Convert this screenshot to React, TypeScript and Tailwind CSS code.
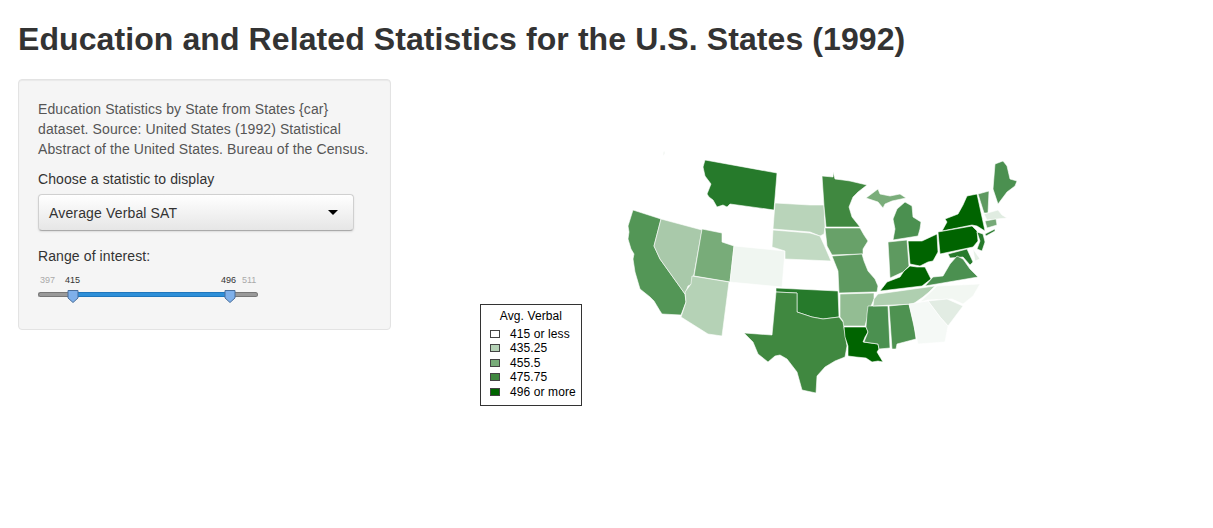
import React from 'react';

const states: { name: string; fill: string; points: string }[] = [
  { name: 'AK', fill: '#f3f7f3', points: '663,153 665,152 665,155 663,157' },
  { name: 'MT', fill: '#267a2b', points: '705,161 777,174 774,211 730,205 727,208 723,206 717,208 713,201 709,198 707,195 711,185 708,181 705,177 703,168' },
  { name: 'CA', fill: '#539656', points: '633,211 661,220 654,247 660,260 685,295 686,303 681,316 662,315 660,312 654,302 650,298 640,290 635,273 633,260 634,255 631,250 628,240 629,233 628,227' },
  { name: 'NV', fill: '#a9c9aa', points: '661,220 702,231 694,275 692,285 688,287 685,295 660,260 654,247' },
  { name: 'UT', fill: '#78ac79', points: '702,230 722,234 722,243 734,247 730,283 694,277' },
  { name: 'AZ', fill: '#b5d2b6', points: '692,277 729,283 722,337 708,335 681,318 686,303 685,293 691,285' },
  { name: 'CO', fill: '#f0f6f1', points: '734,247 785,252 782,288 730,283' },
  { name: 'SD', fill: '#b9d4ba', points: '775,204 810,206 824,206 825,228 824,235 820,237 810,233 773,230' },
  { name: 'NE', fill: '#c2dac3', points: '773,231 810,234 820,237 825,248 831,262 785,260 785,252 772,248' },
  { name: 'MN', fill: '#408840', points: '822,177 833,178 833,173 835,180 843,181 850,182 867,186 858,193 853,198 849,208 852,218 860,228 826,228 824,207' },
  { name: 'IA', fill: '#68a169', points: '825,229 860,229 864,236 868,242 863,250 863,255 832,256 827,247' },
  { name: 'MO', fill: '#5e9a60', points: '832,257 862,255 864,262 868,272 875,280 878,287 877,293 873,293 839,294 838,272' },
  { name: 'AR', fill: '#93bd93', points: '840,295 874,294 874,300 869,312 865,327 843,327 843,322 840,318' },
  { name: 'OK', fill: '#267a2b', points: '776,289 838,292 839,318 823,320 812,318 797,313 797,294 776,293' },
  { name: 'TX', fill: '#408840', points: '776,293 797,294 797,313 806,316 812,318 823,320 839,318 843,323 845,335 847,347 845,358 835,362 825,368 817,377 816,394 802,391 797,373 787,360 780,356 775,357 768,363 758,355 753,343 744,334 772,336' },
  { name: 'LA', fill: '#006400', points: '844,328 866,328 868,333 865,338 863,343 878,345 879,350 877,353 883,363 878,362 872,363 866,359 856,358 848,357 848,347 845,338' },
  { name: 'MS', fill: '#4b9050', points: '868,307 888,307 890,349 879,350 878,345 864,343 868,333 866,328 867,315' },
  { name: 'AL', fill: '#4e9251', points: '889,307 909,305 914,325 916,340 897,345 896,350 892,350' },
  { name: 'TN', fill: '#afcfb0', points: '878,295 935,287 929,293 923,298 913,305 873,307 874,300' },
  { name: 'KY', fill: '#006400', points: '880,292 887,283 900,278 904,272 910,267 917,268 925,268 931,280 922,287' },
  { name: 'IN', fill: '#5e9a60', points: '888,243 907,241 909,267 903,273 890,279 889,260' },
  { name: 'OH', fill: '#006400', points: '908,242 922,242 937,235 938,253 933,262 928,263 920,267 910,265' },
  { name: 'MI', fill: '#4b9050', points: '897,210 905,203 912,207 913,218 921,223 920,230 918,237 893,241 895,230 893,220' },
  { name: 'UP', fill: '#7aad7a', points: '866,199 878,190 880,195 890,197 900,195 906,199 892,202 885,205 883,209 878,203' },
  { name: 'NY', fill: '#006400', points: '967,197 977,195 985,232 977,227 972,226 942,232 947,223 945,220 958,215 963,206' },
  { name: 'PA', fill: '#006400', points: '938,233 972,227 977,232 978,242 973,248 940,255' },
  { name: 'NJ', fill: '#267a2b', points: '977,233 983,235 985,243 982,252 977,250 980,242' },
  { name: 'VT', fill: '#5e9a60', points: '978,195 989,192 988,214 984,214' },
  { name: 'ME', fill: '#4b9050', points: '995,165 1003,162 1007,167 1010,180 1017,182 1015,187 1007,193 998,205 993,190' },
  { name: 'MA', fill: '#e0ece1', points: '984,215 998,211 1002,216 1007,219 987,221' },
  { name: 'CT', fill: '#76a977', points: '985,222 996,220 997,226 987,229' },
  { name: 'LI', fill: '#267a2b', points: '985,235 995,230 995,232 986,237' },
  { name: 'MD', fill: '#267a2b', points: '948,255 967,250 973,263 970,266 963,258 950,259' },
  { name: 'DE', fill: '#e6f0e6', points: '973,250 980,260 975,262' },
  { name: 'VA', fill: '#4b9050', points: '925,287 933,278 943,277 950,265 957,257 963,260 970,270 978,278' },
  { name: 'NC', fill: '#f2f7f2', points: '937,287 980,285 973,297 963,305 952,300 928,301 920,303' },
  { name: 'SC', fill: '#e2ece3', points: '928,302 947,300 963,307 948,327 940,318' },
  { name: 'GA', fill: '#f5f9f6', points: '909,305 928,302 940,318 948,327 945,343 918,345' },
];

const legend = [
  { label: '415 or less', color: '#ffffff' },
  { label: '435.25', color: '#b5d2b6' },
  { label: '455.5', color: '#78ac79' },
  { label: '475.75', color: '#408840' },
  { label: '496 or more', color: '#006400' },
];

function Handle({ className }: { className: string }) {
  return (
    <svg viewBox="0 0 12 14" className={className}>
      <path d="M1 1.5h10v7.5l-5 4.5-5-4.5z" fill="#7fb0ea" stroke="#4a6f9c" strokeWidth="1" strokeLinejoin="round" />
    </svg>
  );
}

export default function App() {
  return (
    <div className="bg-white min-h-[528px] px-[18px] font-['Liberation_Sans',Arial,sans-serif] text-[#333333]">
      <h1 className="text-[32px] leading-[40px] font-bold tracking-[0.09px] pt-[19px] pb-[20px]">
        Education and Related Statistics for the U.S. States (1992)
      </h1>
      <div className="flex items-start">
        <div className="w-[373px] h-[251px] shrink-0 bg-[#f5f5f5] border border-[#e3e3e3] rounded p-[19px] shadow-[inset_0_1px_1px_rgba(0,0,0,0.05)] text-sm leading-5 tracking-[0.1px]">
          <p className="text-[#555555] mb-[10px]">
            Education Statistics by State from States {'{car}'} dataset. Source: United States (1992) Statistical Abstract of the United States. Bureau of the Census.
          </p>
          <div className="mb-[5px]">Choose a statistic to display</div>
          <div className="w-[316px] h-[37px] flex items-center justify-between pl-[10px] pr-[15px] rounded border border-[#d0d0d0] border-b-[#aaaaaa] bg-gradient-to-b from-white to-[#e6e6e6] shadow-[0_1px_2px_rgba(0,0,0,0.1)] tracking-[0.15px]">
            <span>Average Verbal SAT</span>
            <span className="w-0 h-0 border-x-[5px] border-x-transparent border-t-[5px] border-t-black" />
          </div>
          <div className="mt-[15px]">Range of interest:</div>
          <div className="w-[220px] mt-[8px] text-[9px] leading-3 tracking-normal">
            <div className="flex pl-[2px]">
              <span className="w-[25px] text-[#aaaaaa]">397</span>
              <span className="w-[156px]">415</span>
              <span className="w-[21px]">496</span>
              <span className="text-[#aaaaaa]">511</span>
            </div>
            <div className="relative flex h-[5px] mt-[6px]">
              <div className="w-[35px] rounded-l-full bg-[#999999] border border-r-0 border-[#777777]" />
              <div className="w-[157px] bg-[#2e8fd8] border-y border-[#1f77bd]" />
              <div className="flex-1 rounded-r-full bg-[#999999] border border-l-0 border-[#777777]" />
              <Handle className="absolute left-[29px] -top-[3px] w-3 h-[14px]" />
              <Handle className="absolute left-[186px] -top-[3px] w-3 h-[14px]" />
            </div>
          </div>
        </div>
        <div className="flex items-start ml-[89px]">
          <div className="mt-[225px] w-[102px] h-[102px] shrink-0 border border-[#333333] text-black text-xs leading-[14.5px] tracking-[0.1px] pt-[4px] pl-[9px]">
            <div className="text-center pr-[9px] mb-[3px]">Avg. Verbal</div>
            {legend.map((item) => (
              <div key={item.label} className="flex items-center gap-[10px]">
                <span className="w-[10px] h-[8px] border border-[#444444]" style={{ backgroundColor: item.color }} />
                <span>{item.label}</span>
              </div>
            ))}
          </div>
          <svg viewBox="600 140 440 270" className="w-[440px] h-[270px] ml-[18px] mt-[60px] shrink-0">
            {states.map((s) => (
              <polygon key={s.name} points={s.points} fill={s.fill} stroke="#ffffff" strokeWidth="0.6" strokeLinejoin="round" />
            ))}
          </svg>
        </div>
      </div>
    </div>
  );
}
